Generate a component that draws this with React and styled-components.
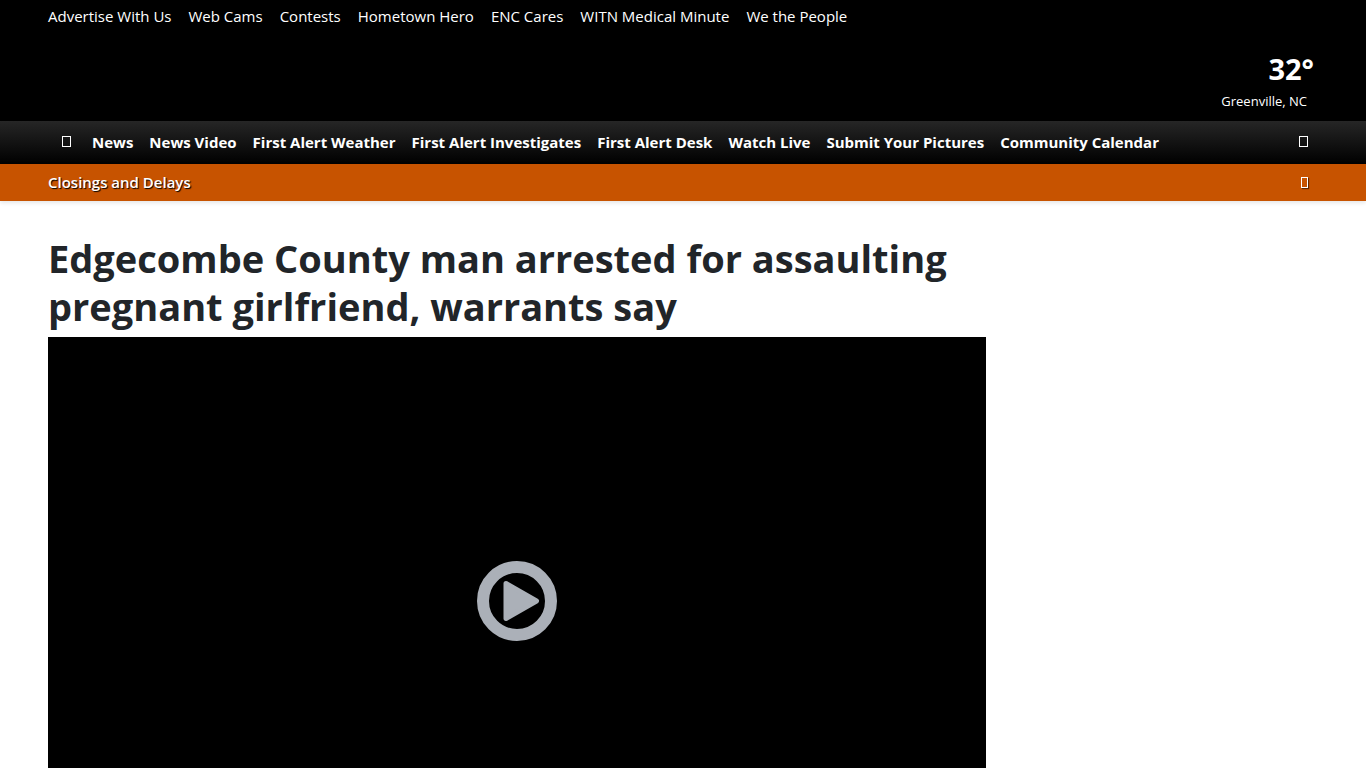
import React from 'react';
import styled, { createGlobalStyle } from 'styled-components';

const GlobalStyle = createGlobalStyle`
	* {
		box-sizing: border-box;
	}

	html {
		scrollbar-width: none;
	}

	body {
		margin: 0;
		background: #fff;
		color: #212529;
		font-family: 'Segoe UI', 'Open Sans', 'Noto Sans', sans-serif;
		font-size: 15px;
		line-height: 24px;
	}
`;

//header
const Header = styled.header`
	background: #000;
	color: #fff;
`;

const TopNav = styled.nav`
	display: flex;
	flex-wrap: wrap;
	gap: 0 17px;
	padding: 4px 48px;
`;

const NavLink = styled.a`
	color: #fff;
	text-decoration: none;
	white-space: nowrap;
	font-weight: ${(props) => (props.$bold ? 700 : 400)};
`;

const Weather = styled.div`
	display: flex;
	flex-direction: column;
	align-items: flex-end;
	padding: 18px 52px 7px;
`;

const Temperature = styled.div`
	font-size: 29px;
	font-weight: 700;
	line-height: 38px;
`;

const City = styled.div`
	font-size: 13px;
	line-height: 26px;
	padding-right: 7px;
`;

const MainNav = styled.nav`
	display: flex;
	align-items: center;
	justify-content: space-between;
	min-height: 43px;
	padding: 0 53px 2px 56px;
	background: linear-gradient(#262626, #000);
`;

const NavItems = styled.div`
	display: flex;
	flex-wrap: wrap;
	align-items: center;
	gap: 0 16px;
`;

const IconButton = styled.button`
	display: flex;
	align-items: center;
	justify-content: center;
	width: 20px;
	height: 24px;
	padding: 0;
	border: 0;
	background: none;
	color: #fff;
`;

const Box = styled.span`
	width: ${(props) => (props.$small ? 7 : 9)}px;
	height: 11px;
	border: 1px solid currentColor;
	box-shadow: ${(props) => (props.$small ? '1px 1px 1px rgba(0, 0, 0, 0.5)' : 'none')};
`;

//orange bar
const AlertBar = styled.div`
	display: flex;
	align-items: center;
	justify-content: space-between;
	min-height: 37px;
	padding: 0 52px 1px 48px;
	background: #c75300;
	box-shadow: 0 2px 4px rgba(0, 0, 0, 0.1);
`;

const AlertLink = styled.a`
	color: #fff;
	font-weight: 600;
	text-decoration: none;
	text-shadow: 1px 1px 1px #000;
`;

//article
const Main = styled.main`
	display: grid;
	grid-template-columns: minmax(0, 1fr) 300px;
	gap: 32px;
	padding: 33px 48px 0;
`;

const Title = styled.h1`
	margin: 0 0 7px;
	font-size: 38px;
	font-weight: 700;
	line-height: 48px;
`;

const Video = styled.div`
	display: flex;
	align-items: center;
	justify-content: center;
	aspect-ratio: 16 / 9;
	background: #000;
`;

const PlayButton = styled.button`
	padding: 0;
	border: 0;
	background: none;
	line-height: 0;
	cursor: pointer;
`;

const topLinks = [
	'Advertise With Us',
	'Web Cams',
	'Contests',
	'Hometown Hero',
	'ENC Cares',
	'WITN Medical Minute',
	'We the People',
];

const mainLinks = [
	'News',
	'News Video',
	'First Alert Weather',
	'First Alert Investigates',
	'First Alert Desk',
	'Watch Live',
	'Submit Your Pictures',
	'Community Calendar',
];

const PlayIcon = () => (
	<svg width="80" height="80" viewBox="0 0 80 80" aria-hidden="true">
		<circle cx="40" cy="40" r="34" fill="none" stroke="#abb0b8" strokeWidth="12" />
		<path
			d="M29 22.5 L59.5 40 L29 57.5 Z"
			fill="#abb0b8"
			stroke="#abb0b8"
			strokeWidth="5"
			strokeLinejoin="round"
		/>
	</svg>
);

const App = () => {
	return (
		<>
			<GlobalStyle />
			<Header>
				<TopNav>
					{topLinks.map((link) => (
						<NavLink key={link} href="#">
							{link}
						</NavLink>
					))}
				</TopNav>
				<Weather>
					<Temperature>32°</Temperature>
					<City>Greenville, NC</City>
				</Weather>
				<MainNav>
					<NavItems>
						<IconButton aria-label="Home">
							<Box />
						</IconButton>
						{mainLinks.map((link) => (
							<NavLink key={link} href="#" $bold>
								{link}
							</NavLink>
						))}
					</NavItems>
					<IconButton aria-label="Search">
						<Box />
					</IconButton>
				</MainNav>
			</Header>
			<AlertBar>
				<AlertLink href="#">Closings and Delays</AlertLink>
				<IconButton aria-label="Close">
					<Box $small />
				</IconButton>
			</AlertBar>
			<Main>
				<article>
					<Title>Edgecombe County man arrested for assaulting pregnant girlfriend, warrants say</Title>
					<Video>
						<PlayButton aria-label="Play video">
							<PlayIcon />
						</PlayButton>
					</Video>
				</article>
			</Main>
		</>
	);
};

export default App;
